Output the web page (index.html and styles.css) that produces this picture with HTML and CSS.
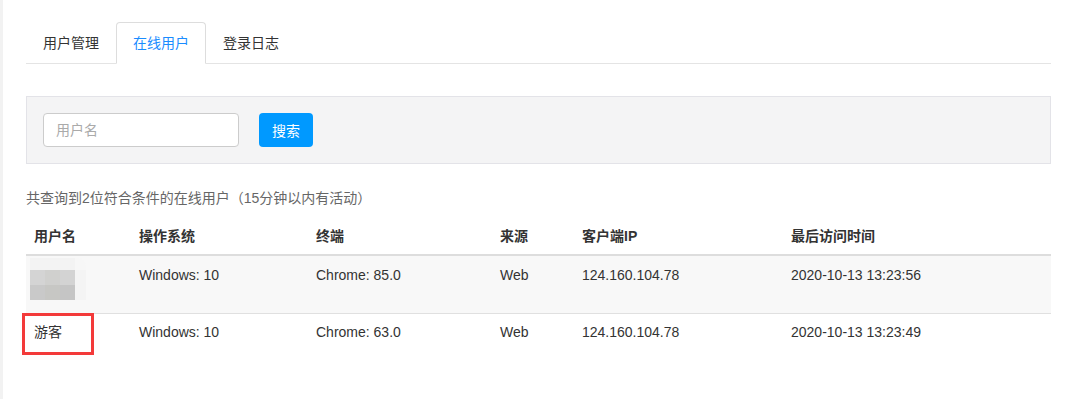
FILE: index.html
```html
<!DOCTYPE html>
<html lang="zh-CN">
<head>
    <meta charset="UTF-8">
    <meta name="viewport" content="width=device-width, initial-scale=1.0">
    <title>在线用户</title>
    <link rel="stylesheet" href="styles.css">
</head>
<body>
    <div class="page">
        <ul class="tabs">
            <li class="tab">用户管理</li>
            <li class="tab active">在线用户</li>
            <li class="tab">登录日志</li>
        </ul>

        <form class="search-bar" onsubmit="return false">
            <input type="text" class="search-input" placeholder="用户名">
            <button type="submit" class="search-btn">搜索</button>
        </form>

        <p class="summary">共查询到2位符合条件的在线用户（15分钟以内有活动）</p>

        <table class="user-table">
            <colgroup>
                <col style="width: 105px">
                <col style="width: 177px">
                <col style="width: 184px">
                <col style="width: 82px">
                <col style="width: 209px">
                <col>
            </colgroup>
            <thead>
                <tr>
                    <th>用户名</th>
                    <th>操作系统</th>
                    <th>终端</th>
                    <th>来源</th>
                    <th>客户端IP</th>
                    <th>最后访问时间</th>
                </tr>
            </thead>
            <tbody>
                <tr class="striped">
                    <td>
                        <div class="avatar">
                            <span class="px l1"></span><span class="px l2"></span><span class="px l3"></span><span class="px l4"></span>
                            <span class="px a1"></span><span class="px a2"></span><span class="px a3"></span><span class="px a4"></span>
                            <span class="px b1"></span><span class="px b2"></span><span class="px b3"></span><span class="px b4"></span>
                        </div>
                    </td>
                    <td>Windows: 10</td>
                    <td>Chrome: 85.0</td>
                    <td>Web</td>
                    <td>124.160.104.78</td>
                    <td>2020-10-13 13:23:56</td>
                </tr>
                <tr>
                    <td class="guest">游客<span class="mark"></span></td>
                    <td>Windows: 10</td>
                    <td>Chrome: 63.0</td>
                    <td>Web</td>
                    <td>124.160.104.78</td>
                    <td>2020-10-13 13:23:49</td>
                </tr>
            </tbody>
        </table>
    </div>
</body>
</html>
```

FILE: styles.css
```css
html, body {
    margin: 0;
    padding: 0;
    height: 100%;
}
body {
    background: #fff;
    font-family: "Liberation Sans", "Noto Sans CJK SC", sans-serif;
    font-size: 14px;
    color: #333;
}
.page {
    min-height: 100%;
    box-sizing: border-box;
    border-left: 3px solid #f2f2f2;
    padding: 22px 21px 0 23px;
}
.tabs {
    list-style: none;
    margin: 0;
    padding: 0;
    display: flex;
    align-items: flex-start;
    border-bottom: 1px solid #e4e4e4;
}
.tab {
    padding: 0 16px;
    line-height: 40px;
    border: 1px solid transparent;
    border-bottom: none;
    border-radius: 4px 4px 0 0;
}
.tab.active {
    color: #1a8cff;
    border-color: #ddd;
    border-bottom: 1px solid #fff;
    margin-bottom: -1px;
    background: #fff;
}
.search-bar {
    margin: 32px 0 0;
    background: #f4f4f5;
    border: 1px solid #e3e3e8;
    padding: 16px;
    display: flex;
    gap: 20px;
}
.search-input {
    width: 196px;
    height: 34px;
    box-sizing: border-box;
    border: 1px solid #ccc;
    border-radius: 4px;
    padding: 0 12px;
    font-family: inherit;
    font-size: 14px;
    background: #fff;
}
.search-input::placeholder {
    color: #aaa;
}
.search-btn {
    width: 54px;
    height: 34px;
    border: none;
    border-radius: 4px;
    background: #0099ff;
    color: #fff;
    font-family: inherit;
    font-size: 14px;
}
.summary {
    margin: 24px 0 0;
    line-height: 20px;
    color: #666;
}
.user-table {
    width: 100%;
    margin-top: 10px;
    border-collapse: collapse;
    table-layout: fixed;
}
.user-table th,
.user-table td {
    text-align: left;
    vertical-align: top;
    padding: 8px;
    line-height: 20px;
}
.user-table th {
    font-weight: bold;
    border-bottom: 2px solid #ddd;
}
.user-table td {
    border-bottom: 1px solid #e0e0e0;
}
.user-table tbody tr:last-child td {
    border-bottom: none;
}
.striped td {
    background: #f8f8f8;
    padding-top: 9px;
}
.avatar {
    width: 56px;
    height: 44px;
    margin: -7px 0 3px -4px;
    display: grid;
    grid-template-columns: 15px 15px 15px 11px;
    grid-template-rows: 12px 15px 15px 2px;
}
.px.l1, .px.l2, .px.l3 { background: #f3f3f3; }
.px.l4 { background: #f7f7f7; border-radius: 0 8px 0 0; }
.px.a1 { background: #d4d4d4; }
.px.a2 { background: #d0d0ce; }
.px.a3 { background: #d3d3d3; }
.px.b1 { background: #c9c9c9; }
.px.b2 { background: #c7c7c4; }
.px.b3 { background: #c5c5c5; }
.px.a4, .px.b4 { background: #f4f4f4; }
.guest {
    position: relative;
}
.mark {
    position: absolute;
    left: -4px;
    top: -1px;
    width: 72px;
    height: 42px;
    box-sizing: border-box;
    border: 3px solid #f33a3a;
}
```
